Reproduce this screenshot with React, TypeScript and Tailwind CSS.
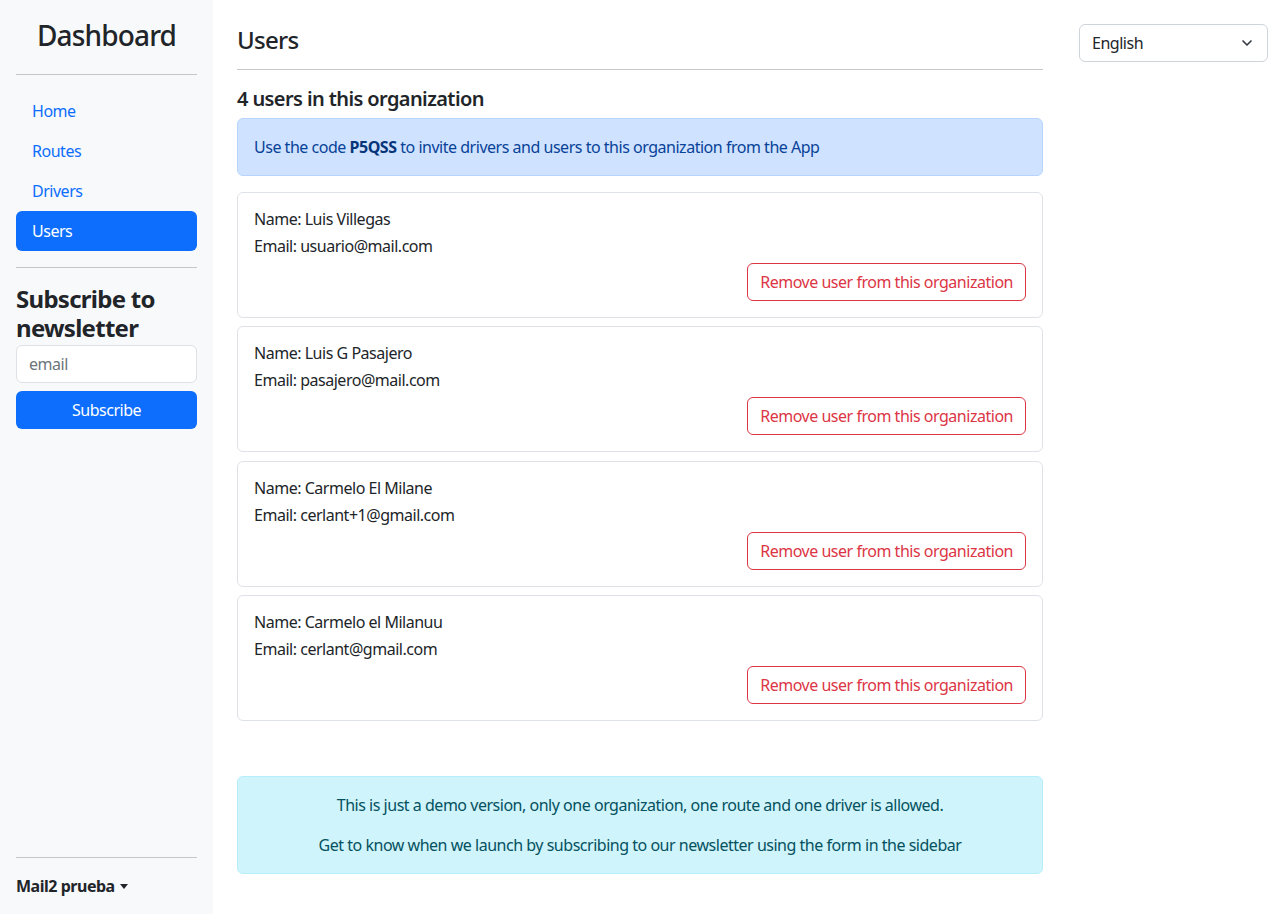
import { ChevronDown } from "lucide-react";

const users = [
  { name: "Luis Villegas", email: "usuario@mail.com" },
  { name: "Luis G Pasajero", email: "pasajero@mail.com" },
  { name: "Carmelo El Milane", email: "cerlant+1@gmail.com" },
  { name: "Carmelo el Milanuu", email: "cerlant@gmail.com" },
];

const navItems = ["Home", "Routes", "Drivers", "Users"];

const Sidebar = () => {
  return (
    <aside className="w-[213px] shrink-0 bg-[#f8f9fa] px-4 flex flex-col">
      <h3 className="pt-[18px] text-[28px] leading-[34px] font-medium tracking-[-0.03em] text-center text-[#212529]">
        Dashboard
      </h3>
      <hr className="mt-[22px] border-t border-[#c5c6c8]" />

      <nav className="mt-4 flex flex-col">
        {navItems.map((item) => (
          <a
            key={item}
            href="#"
            className={
              item === "Users"
                ? "h-10 px-4 flex items-center rounded-md bg-[#0d6efd] text-white"
                : "h-10 px-4 flex items-center text-[#0d6efd]"
            }
          >
            {item}
          </a>
        ))}
      </nav>
      <hr className="mt-4 border-t border-[#c5c6c8]" />

      {/* Newsletter */}
      <h4 className="mt-[17px] text-2xl leading-[28.8px] font-bold tracking-[-0.03em] text-[#212529]">
        Subscribe to newsletter
      </h4>
      <input
        type="text"
        placeholder="email"
        className="mt-[2px] h-[38px] w-full rounded-md border border-[#dee2e6] bg-white px-3 text-base placeholder:text-[#6c757d] outline-none"
      />
      <button className="mt-2 h-[38px] w-full rounded-md bg-[#0d6efd] text-white">
        Subscribe
      </button>

      <div className="mt-auto">
        <hr className="border-t border-[#c5c6c8]" />
        <div className="py-4 flex items-center gap-[5px] font-bold text-[#212529] leading-6">
          Mail2 prueba
          <span className="inline-block w-0 h-0 border-l-[4px] border-r-[4px] border-t-[5px] border-l-transparent border-r-transparent border-t-[#212529]" />
        </div>
      </div>
    </aside>
  );
};

const UserCard = ({ name, email }: { name: string; email: string }) => {
  return (
    <div className="rounded-md border border-[#dee2e6] px-4 pt-[14px] pb-4">
      <p className="leading-6">Name: {name}</p>
      <p className="mt-[3px] leading-6">Email: {email}</p>
      <div className="mt-[5px] flex justify-end">
        <button className="h-[38px] px-3 rounded-md border border-[#dc3545] text-[#dc3545]">
          Remove user from this organization
        </button>
      </div>
    </div>
  );
};

export default function App() {
  return (
    <div
      className="flex min-h-[914px] bg-white text-base tracking-[-0.03em] text-[#212529]"
      style={{ fontFamily: '"Noto Sans", "Open Sans", sans-serif' }}
    >
      <Sidebar />

      <main className="flex-1 flex px-6 pt-6">
        <div className="w-[806px] shrink-0 flex flex-col pb-10">
          <h2 className="text-2xl leading-8 font-medium tracking-[-0.03em]">Users</h2>
          <hr className="mt-[13px] border-t border-[#c8c9ca]" />
          <h5 className="mt-[17px] text-xl leading-6 font-semibold tracking-[-0.03em]">
            4 users in this organization
          </h5>
          <div className="mt-[7px] rounded-md border border-[#b6d4fe] bg-[#cfe2ff] p-4 leading-6 text-[#084298]">
            Use the code <b className="text-[#06357a]">P5QSS</b> to invite
            drivers and users to this organization from the App
          </div>

          <div className="mt-4 flex flex-col gap-[8.33px]">
            {users.map((u) => (
              <UserCard key={u.email} name={u.name} email={u.email} />
            ))}
          </div>

          <div className="mt-[55px] rounded-md border border-[#b6effb] bg-[#cff4fc] p-4 text-center leading-6 text-[#055160]">
            <p>
              This is just a demo version, only one organization, one route and
              one driver is allowed.
            </p>
            <p className="mt-4">
              Get to know when we launch by subscribing to our newsletter using
              the form in the sidebar
            </p>
          </div>
        </div>

        <div className="ml-9 w-[189px]">
          <div className="h-[38px] rounded-md border border-[#ced4da] bg-white pl-3 pr-3 flex items-center justify-between">
            <span>English</span>
            <ChevronDown size={16} strokeWidth={2.5} className="text-[#343a40]" />
          </div>
        </div>
      </main>
    </div>
  );
}
